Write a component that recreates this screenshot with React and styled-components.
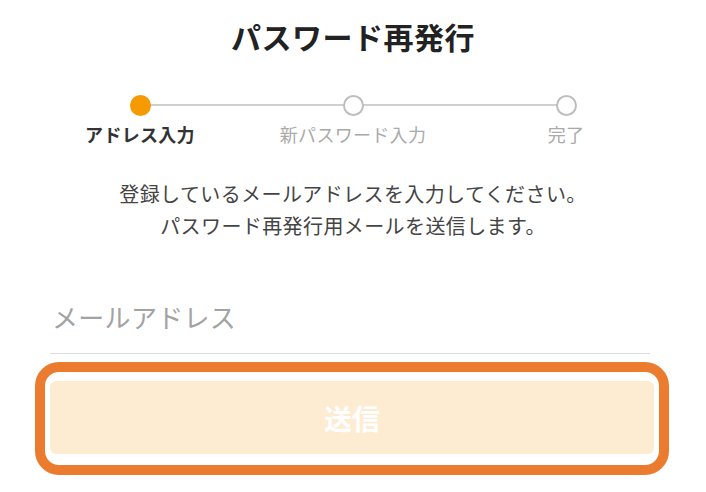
import React from 'react';
import styled, { createGlobalStyle } from 'styled-components';

const GlobalStyle = createGlobalStyle`
    body {
        margin: 0;
        background: #fff;
        font-family: "Noto Sans CJK JP", "Noto Sans", sans-serif;
        color: #333;
    }
`;

const Page = styled.main`
    width: 706px;
    padding-top: 16px;
`;

const Title = styled.h1`
    margin: 0;
    font-size: 30px;
    line-height: 40px;
    letter-spacing: 0.5px;
    font-weight: 700;
    text-align: center;
    color: #222;
`;

const Stepper = styled.ol`
    display: grid;
    grid-template-columns: repeat(3, 213px);
    justify-content: center;
    margin: 39px 0 0;
    padding: 0;
    list-style: none;
`;

const Step = styled.li`
    position: relative;
    display: flex;
    flex-direction: column;
    align-items: center;

    /* connector to the previous step */
    &:not(:first-child)::before {
        content: '';
        position: absolute;
        top: 9px;
        left: -50%;
        right: 50%;
        height: 2px;
        background: #cfcfcf;
    }
`;

const Dot = styled.span`
    position: relative;
    z-index: 1;
    box-sizing: border-box;
    width: 21px;
    height: 21px;
    border-radius: 50%;
    background: ${p => (p.$active ? '#f59a00' : '#fff')};
    border: ${p => (p.$active ? 'none' : '2px solid #bdbdbd')};
`;

const StepLabel = styled.span`
    margin-top: 6px;
    font-size: 18px;
    line-height: 24px;
    letter-spacing: 0.3px;
    font-weight: ${p => (p.$active ? 700 : 400)};
    color: ${p => (p.$active ? '#333' : '#aaa')};
    white-space: nowrap;
`;

const Lead = styled.p`
    margin: 32px 0 0;
    font-size: 20px;
    line-height: 32px;
    letter-spacing: 0.4px;
    text-align: center;
    color: #444;
`;

const Form = styled.form`
    width: 604px;
    margin: 50px 0 0 50px;
`;

const EmailInput = styled.input`
    display: block;
    box-sizing: border-box;
    width: 600px;
    height: 62px;
    padding: 0 0 12px 2px;
    border: none;
    border-bottom: 1px solid #dcdcdc;
    outline: none;
    font-family: inherit;
    font-size: 26px;
    letter-spacing: 0.3px;
    color: #333;
    background: transparent;

    &::placeholder {
        color: #a3a3a3;
    }
`;

const FocusRing = styled.div`
    margin: 8px -15px 0;
    padding: 9px 5px 11px;
    border: 10px solid #ea7b2f;
    border-radius: 24px;
    background: #fff;
`;

const SubmitButton = styled.button`
    display: block;
    width: 100%;
    height: 73px;
    border: none;
    border-radius: 6px;
    background: #fdebd2;
    font-family: inherit;
    font-size: 28px;
    font-weight: 700;
    color: #fff;
    cursor: not-allowed;
`;

const steps = [
    { label: 'アドレス入力', active: true },
    { label: '新パスワード入力' },
    { label: '完了' },
];

const App = () => (
    <Page>
        <GlobalStyle />
        <Title>パスワード再発行</Title>
        <Stepper>
            {steps.map(s => (
                <Step key={s.label}>
                    <Dot $active={s.active} />
                    <StepLabel $active={s.active}>{s.label}</StepLabel>
                </Step>
            ))}
        </Stepper>
        <Lead>
            登録しているメールアドレスを入力してください。
            <br />
            パスワード再発行用メールを送信します。
        </Lead>
        <Form onSubmit={e => e.preventDefault()}>
            <EmailInput type="email" placeholder="メールアドレス" />
            <FocusRing>
                <SubmitButton type="submit" disabled>送信</SubmitButton>
            </FocusRing>
        </Form>
    </Page>
);

export default App;
